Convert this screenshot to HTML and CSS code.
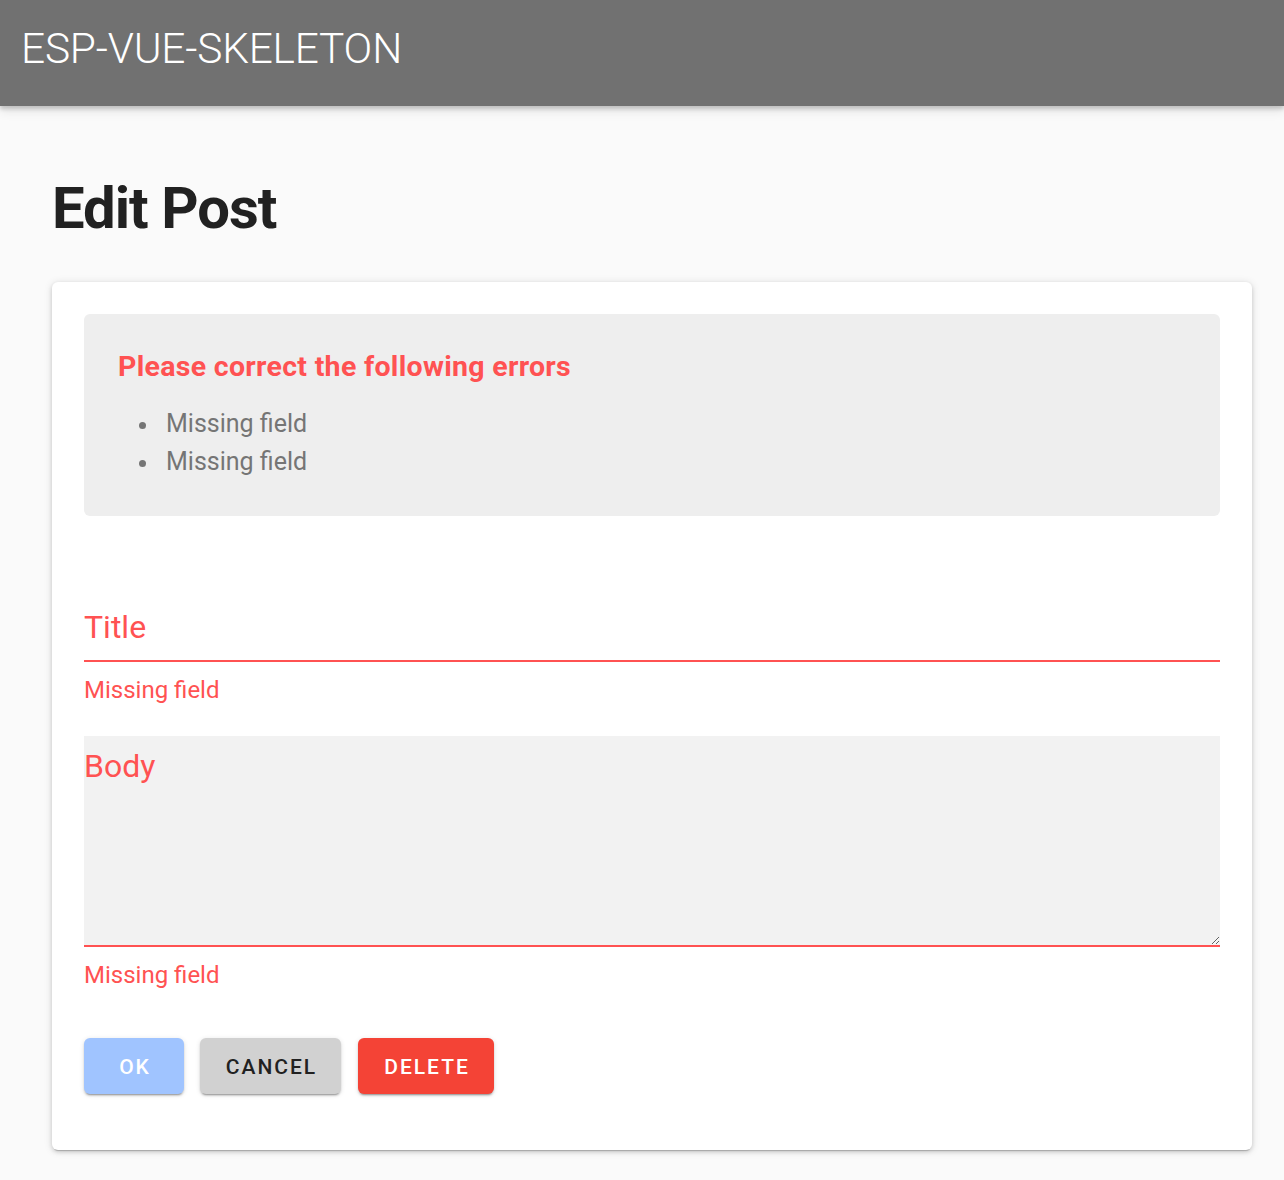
FILE: index.html
```html
<!DOCTYPE html>
<html lang="en">
<head>
<meta charset="utf-8">
<title>ESP-VUE-SKELETON</title>
<link rel="stylesheet" href="styles.css">
</head>
<body>
<header class="toolbar">
  <div class="toolbar-title">ESP-VUE-SKELETON</div>
</header>
<main class="content">
  <h1 class="page-title">Edit Post</h1>
  <section class="card">
    <div class="errors">
      <h3 class="errors-title">Please correct the following errors</h3>
      <ul class="errors-list">
        <li>Missing field</li>
        <li>Missing field</li>
      </ul>
    </div>
    <div class="field field-title">
      <input class="input" type="text" placeholder="Title">
      <div class="helper">Missing field</div>
    </div>
    <div class="field field-body">
      <textarea class="textarea" placeholder="Body"></textarea>
      <div class="helper">Missing field</div>
    </div>
    <div class="actions">
      <button class="btn btn-ok">OK</button>
      <button class="btn btn-cancel">CANCEL</button>
      <button class="btn btn-delete">DELETE</button>
    </div>
  </section>
</main>
</body>
</html>
```
FILE: styles.css
```css
* { box-sizing: border-box; }
html, body {
  margin: 0;
  padding: 0;
  background: #fafafa;
  font-family: Roboto, "Noto Sans", Arial, sans-serif;
}
.toolbar {
  height: 106px;
  background: #717171;
  padding: 24px 0 0 21px;
  box-shadow: 0 3px 4px rgba(0,0,0,0.18), 0 6px 10px rgba(0,0,0,0.08);
  position: relative;
  z-index: 1;
}
.toolbar-title {
  color: #fff;
  font-size: 42.4px;
  font-weight: 300;
  line-height: 50px;
  letter-spacing: -0.2px;
}
.content {
  padding: 0 32px 30px 52px;
}
.page-title {
  margin: 67px 0 39px 0;
  font-size: 58px;
  font-weight: 700;
  line-height: 70px;
  letter-spacing: -1px;
  color: #212121;
}
.card {
  background: #fff;
  border-radius: 6px;
  padding: 32px 32px 32px 32px;
  box-shadow: 0 3px 1px -2px rgba(0,0,0,0.2), 0 2px 4px 0 rgba(0,0,0,0.14), 0 1px 8px 0 rgba(0,0,0,0.12);
}
.errors {
  background: #eeeeee;
  border-radius: 6px;
  padding: 37px 34px 35px 34px;
}
.errors-title {
  margin: 0;
  color: #ff5252;
  font-size: 28.5px;
  font-weight: 700;
  line-height: 32px;
  letter-spacing: 0.3px;
}
.errors-list {
  list-style: none;
  margin: 22px 0 0 0;
  padding-left: 48px;
  color: #757575;
  font-size: 25px;
  line-height: 38px;
}
.errors-list li::before {
  content: "";
  display: inline-block;
  width: 7px;
  height: 7px;
  border-radius: 50%;
  background: #757575;
  vertical-align: middle;
  margin: 0 20px 0 -27px;
}
.field-title {
  margin-top: 91px;
}
.input {
  display: block;
  width: 100%;
  border: 0;
  border-bottom: 2px solid #ff5252;
  background: transparent;
  font-family: inherit;
  font-size: 32px;
  line-height: 40px;
  height: 55px;
  padding: 0 0 13px 0;
  color: #212121;
  outline: none;
}
.input::placeholder, .textarea::placeholder {
  color: #ff5252;
  opacity: 1;
}
.helper {
  margin-top: 13px;
  color: #ff5252;
  font-size: 24px;
  line-height: 30px;
}
.field-body {
  margin-top: 31px;
}
.textarea {
  display: block;
  width: 100%;
  height: 211px;
  border: 0;
  border-bottom: 2px solid #ff5252;
  background: #f2f2f2;
  font-family: inherit;
  font-size: 32px;
  line-height: 40px;
  padding: 10px 0 0 0;
  color: #212121;
  outline: none;
  resize: vertical;
}
.actions {
  display: flex;
  gap: 16px;
  margin-top: 48px;
  margin-bottom: 24px;
}
.btn {
  height: 56px;
  border: 0;
  border-radius: 6px;
  font-family: inherit;
  font-size: 21px;
  font-weight: 500;
  letter-spacing: 2px;
  padding: 2px 0 0 2px;
  box-shadow: 0 3px 1px -2px rgba(0,0,0,0.2), 0 2px 2px 0 rgba(0,0,0,0.14), 0 1px 5px 0 rgba(0,0,0,0.12);
}
.btn-ok {
  width: 100px;
  background: #a0c4ff;
  color: #fff;
}
.btn-cancel {
  width: 141px;
  background: #d1d1d1;
  color: #212121;
}
.btn-delete {
  width: 136px;
  margin-left: 1px;
  background: #f44336;
  color: #fff;
}
```
